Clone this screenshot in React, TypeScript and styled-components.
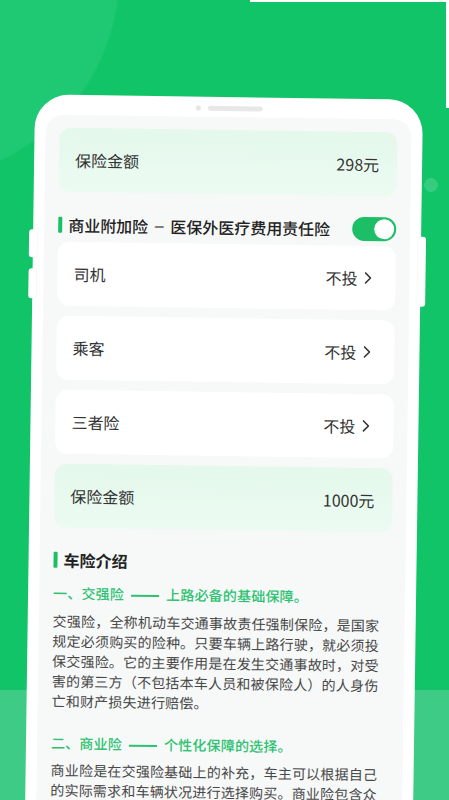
import React from "react";
import styled, { createGlobalStyle } from "styled-components";

const GlobalStyle = createGlobalStyle`
  html, body { margin: 0; padding: 0; }
  body {
    background: #12c468;
    font-family: "Noto Sans CJK SC", "Noto Sans", sans-serif;
  }
  * { box-sizing: border-box; }
`;

const GREEN = "#1dbf66";

const Page = styled.div`
  width: 449px;
  height: 800px;
  overflow: hidden;
  padding-top: 97px;
  background:
    linear-gradient(#ffffff, #ffffff) 250px 0 / 199px 2px no-repeat,
    linear-gradient(#ffffff, #ffffff) 446px 0 / 3px 108px no-repeat,
    radial-gradient(circle 7px at 431px 185px, #35cc80 96%, transparent 100%),
    radial-gradient(circle 205px at -85px -25px, #1fc872 99%, transparent 100%),
    linear-gradient(180deg, #12c468 690px, #3ecb86 690px);
`;

const Phone = styled.div`
  position: relative;
  margin-left: 30px;
  width: 388px;
  height: 720px;
  background: #ffffff;
  border-radius: 34px 34px 0 0;
  padding: 9px 11px 0;
  display: flex;
  flex-direction: column;
  align-items: center;
  transform: rotate(0.8deg);
  transform-origin: 50% 50%;
`;

const SideButton = styled.div<{ $side: "left" | "right"; $top: number; $h: number }>`
  position: absolute;
  top: ${(p) => p.$top}px;
  ${(p) => (p.$side === "left" ? "left: -4px;" : "right: -5px;")}
  width: 8px;
  height: ${(p) => p.$h}px;
  background: #ffffff;
  border-radius: 3px;
  box-shadow: 0 0 0 0.5px rgba(0, 0, 0, 0.05);
`;

const Notch = styled.div`
  display: flex;
  align-items: center;
  gap: 7px;
  height: 5px;
`;

const Dot = styled.div`
  width: 5px;
  height: 5px;
  border-radius: 50%;
  background: #e6e6e6;
`;

const Speaker = styled.div`
  width: 55px;
  height: 5px;
  border-radius: 3px;
  background: #e8e8e8;
`;

const Screen = styled.div`
  align-self: stretch;
  flex: 1;
  margin-top: 6px;
  background: #f7f8f8;
  border-radius: 18px 18px 0 0;
  padding: 12.5px 14px 0;
  display: flex;
  flex-direction: column;
`;

const AmountCard = styled.div`
  height: 64px;
  border-radius: 12px;
  background: linear-gradient(180deg, #e4f8eb 0%, #ecfbf2 100%);
  padding: 0 18px 0 16px;
  display: flex;
  align-items: center;
  justify-content: space-between;
  font-size: 16px;
  line-height: 24px;
  color: #333333;
`;

const HeaderRow = styled.div`
  margin-top: 21.5px;
  height: 24px;
  display: flex;
  align-items: center;
  justify-content: space-between;
`;

const Title = styled.div<{ $weight?: number }>`
  display: flex;
  align-items: center;
  font-size: 16px;
  font-weight: ${(p) => p.$weight ?? 500};
  line-height: 24px;
  color: #222222;
  white-space: nowrap;
`;

const Bar = styled.span`
  width: 4px;
  height: 16px;
  margin-right: 6px;
  border-radius: 1px;
  background: ${GREEN};
`;

const Dash = styled.span<{ $w: number }>`
  display: inline-block;
  width: ${(p) => p.$w}px;
  text-align: center;
  font-family: "Liberation Sans", sans-serif;
`;

const LongDash = styled.span`
  display: inline-block;
  width: 28px;
  height: 1.5px;
  margin: 0 7px;
  vertical-align: middle;
  background: currentColor;
`;

const Toggle = styled.div`
  width: 44px;
  height: 24px;
  border-radius: 12px;
  background: ${GREEN};
  display: flex;
  align-items: center;
  justify-content: flex-end;
  padding-right: 1px;
`;

const Knob = styled.div`
  width: 22px;
  height: 22px;
  border-radius: 50%;
  background: #ffffff;
  border: 1.5px solid ${GREEN};
`;

const List = styled.div`
  margin-top: 4.5px;
  display: flex;
  flex-direction: column;
  gap: 10px;
`;

const Row = styled.div`
  height: 64px;
  border-radius: 12px;
  background: #ffffff;
  padding: 0 24px 0 16px;
  display: flex;
  align-items: center;
  justify-content: space-between;
  font-size: 16px;
  line-height: 24px;
  color: #333333;
`;

const Value = styled.div`
  display: flex;
  align-items: center;
  gap: 7px;
`;

const Intro = styled.div`
  margin-top: 20.5px;
  display: flex;
  flex-direction: column;
`;

const SubHead = styled.div<{ $mt: number }>`
  margin-top: ${(p) => p.$mt}px;
  font-size: 14px;
  line-height: 20px;
  font-weight: 500;
  color: #2cc271;
  letter-spacing: 0.2px;
  white-space: nowrap;
`;

const Paragraph = styled.div<{ $mt: number }>`
  margin-top: ${(p) => p.$mt}px;
  font-size: 14px;
  line-height: 20px;
  color: #484848;
  letter-spacing: 0.2px;
`;

const Line = styled.div`
  white-space: nowrap;
`;

const Chevron = () => (
  <svg width="7" height="12" viewBox="0 0 7 12" fill="none">
    <path d="M1 1l5 5-5 5" stroke="#333333" strokeWidth="1.6" strokeLinecap="round" strokeLinejoin="round" />
  </svg>
);

const rows = ["司机", "乘客", "三者险"];

const para1 = [
  "交强险，全称机动车交通事故责任强制保险，是国家",
  "规定必须购买的险种。只要车辆上路行驶，就必须投",
  "保交强险。它的主要作用是在发生交通事故时，对受",
  "害的第三方（不包括本车人员和被保险人）的人身伤",
  "亡和财产损失进行赔偿。",
];

const para2 = [
  "商业险是在交强险基础上的补充，车主可以根据自己",
  "的实际需求和车辆状况进行选择购买。商业险包含众",
];

export default function App() {
  return (
    <>
      <GlobalStyle />
      <Page>
        <Phone>
          <SideButton $side="left" $top={135} $h={28} />
          <SideButton $side="left" $top={174} $h={30} />
          <SideButton $side="right" $top={137} $h={70} />
          <Notch>
            <Dot />
            <Speaker />
          </Notch>
          <Screen>
            <AmountCard>
              <span>保险金额</span>
              <span>298元</span>
            </AmountCard>
            <HeaderRow>
              <Title>
                <Bar />
                <span>商业附加险</span>
                <Dash $w={22}>–</Dash>
                <span>医保外医疗费用责任险</span>
              </Title>
              <Toggle>
                <Knob />
              </Toggle>
            </HeaderRow>
            <List>
              {rows.map((r) => (
                <Row key={r}>
                  <span>{r}</span>
                  <Value>
                    <span>不投</span>
                    <Chevron />
                  </Value>
                </Row>
              ))}
              <AmountCard>
                <span>保险金额</span>
                <span>1000元</span>
              </AmountCard>
            </List>
            <Intro>
              <Title $weight={700}>
                <Bar />
                <span>车险介绍</span>
              </Title>
              <SubHead $mt={11}>
                一、交强险<LongDash />上路必备的基础保障。
              </SubHead>
              <Paragraph $mt={8}>
                {para1.map((l) => (
                  <Line key={l}>{l}</Line>
                ))}
              </Paragraph>
              <SubHead $mt={22}>
                二、商业险<LongDash />个性化保障的选择。
              </SubHead>
              <Paragraph $mt={7}>
                {para2.map((l) => (
                  <Line key={l}>{l}</Line>
                ))}
              </Paragraph>
            </Intro>
          </Screen>
        </Phone>
      </Page>
    </>
  );
}
